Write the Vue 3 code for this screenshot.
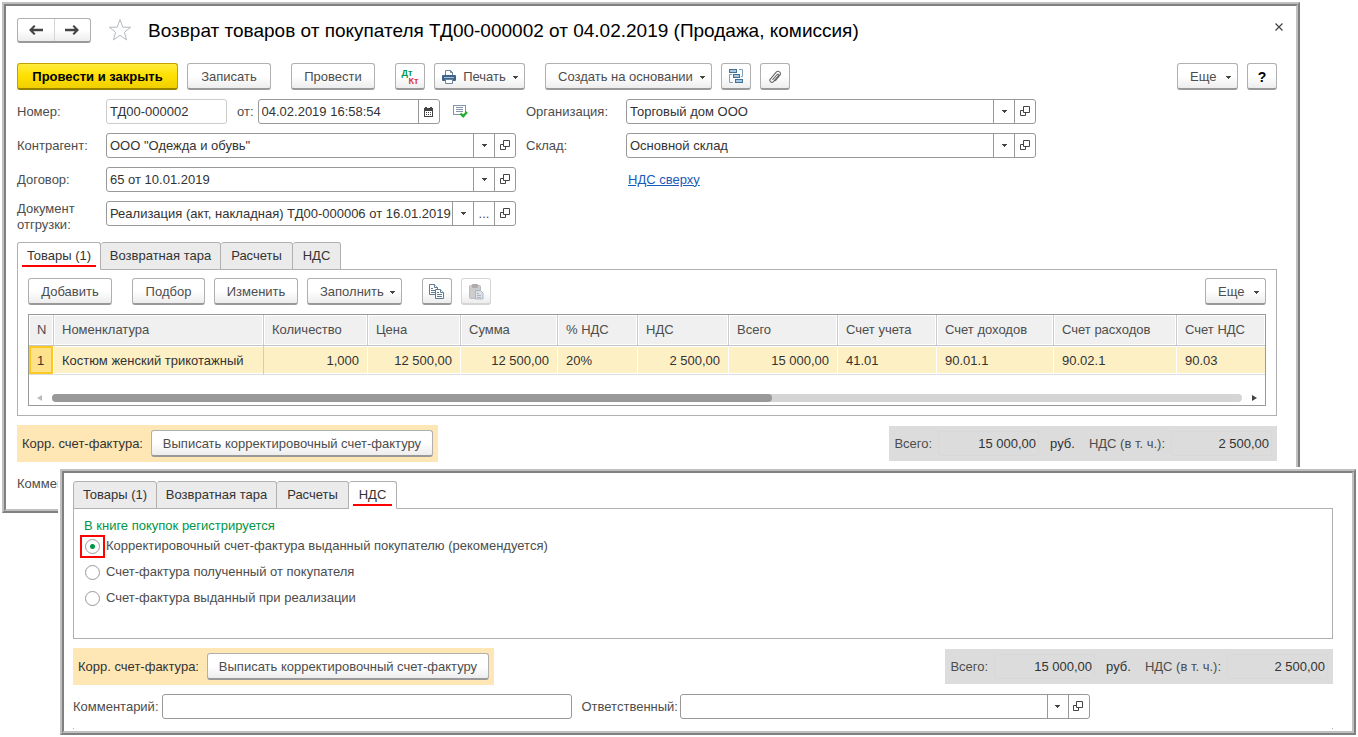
<script setup>
import { ref } from 'vue'

const leftFields = [
  { id: 'partner', label: 'Контрагент:', value: 'ООО "Одежда и обувь"' },
  { id: 'contract', label: 'Договор:', value: '65 от 10.01.2019' },
  { id: 'shipment', label: 'Документ отгрузки:', value: 'Реализация (акт, накладная) ТД00-000006 от 16.01.2019', more: true },
]
const rightFields = [
  { id: 'org', label: 'Организация:', value: 'Торговый дом ООО' },
  { id: 'store', label: 'Склад:', value: 'Основной склад' },
]
const tabs = [
  { title: 'Товары (1)', cls: 't-goods' },
  { title: 'Возвратная тара', cls: 't-tare' },
  { title: 'Расчеты', cls: 't-calc' },
  { title: 'НДС', cls: 't-vat' },
]
const columns = [
  { title: 'N', value: '1', cls: 'c-n' },
  { title: 'Номенклатура', value: 'Костюм женский трикотажный', cls: 'c-name' },
  { title: 'Количество', value: '1,000', cls: 'c-qty', num: true },
  { title: 'Цена', value: '12 500,00', cls: 'c-price', num: true },
  { title: 'Сумма', value: '12 500,00', cls: 'c-sum', num: true },
  { title: '% НДС', value: '20%', cls: 'c-rate' },
  { title: 'НДС', value: '2 500,00', cls: 'c-vat', num: true },
  { title: 'Всего', value: '15 000,00', cls: 'c-total', num: true },
  { title: 'Счет учета', value: '41.01', cls: 'c-acc' },
  { title: 'Счет доходов', value: '90.01.1', cls: 'c-inc' },
  { title: 'Счет расходов', value: '90.02.1', cls: 'c-exp' },
  { title: 'Счет НДС', value: '90.03', cls: 'c-accvat' },
]
const options = [
  'Корректировочный счет-фактура выданный покупателю (рекомендуется)',
  'Счет-фактура полученный от покупателя',
  'Счет-фактура выданный при реализации',
]
const chosen = ref(0)
</script>

<template>
  <div class="desk">
    <svg class="defs" width="0" height="0" aria-hidden="true">
      <symbol id="i-open" viewBox="0 0 11 11">
        <path d="M3.500 .5h6v6h-6zM3 4.500H.5v5h5V7" fill="none" stroke="#444" />
      </symbol>
      <symbol id="i-caret" viewBox="0 0 5 3">
        <path d="M0 0h5v1H4v1H3v1H2V2H1V1H0z" fill="#444" />
      </symbol>
    </svg>

    <main class="window main-window">
      <div class="pane main-pane">
        <header class="title-row">
          <div class="nav">
            <button type="button" aria-label="Назад">
              <svg width="14" height="10" viewBox="0 0 14 10"><path d="M0 5l5-5 1.500 1.200L4.200 3.700H14v2.600H4.200l2.300 2.500L5 10z" fill="#444" /></svg>
            </button>
            <button type="button" aria-label="Вперед">
              <svg width="14" height="10" viewBox="0 0 14 10"><path d="M14 5L9 0 7.500 1.200l2.300 2.500H0v2.600h9.800L7.500 8.800 9 10z" fill="#444" /></svg>
            </button>
          </div>
          <button type="button" class="bare star" aria-label="В избранное">
            <svg width="24" height="24" viewBox="0 0 24 24"><path d="M12 1.500l2.700 7.600 8 .2-6.300 4.900 2.200 7.700L12 17.300l-6.600 4.600 2.200-7.700L1.300 9.300l8-.2z" fill="#fff" stroke="#b3bac2" /></svg>
          </button>
          <h1>Возврат товаров от покупателя ТД00-000002 от 04.02.2019 (Продажа, комиссия)</h1>
          <button type="button" class="bare close" aria-label="Закрыть">
            <svg width="8" height="8" viewBox="0 0 8 8"><path d="M.5.5l7 7M7.500.5l-7 7" stroke="#444" stroke-width="1.200" /></svg>
          </button>
        </header>

        <div class="toolbar">
          <button type="button" class="btn primary">Провести и закрыть</button>
          <button type="button" class="btn w-84">Записать</button>
          <button type="button" class="btn w-84 apart">Провести</button>
          <button type="button" class="btn icon apart" aria-label="Дт Кт">
            <span class="dtkt"><span class="dt">Дт</span><span class="kt">Кт</span></span>
          </button>
          <button type="button" class="btn print">
            <svg width="14" height="14" viewBox="0 0 14 14"><path d="M3.500 6V.5h5l2 2V6" fill="#fff" stroke="#6c8399" /><path d="M8.500.5v2h2" fill="none" stroke="#6c8399" /><rect y="5" width="14" height="6" rx="1" fill="#3c638c" /><path d="M2 7.500h10" stroke="#a9c1d8" /><path d="M3.500 9.500h7v4h-7z" fill="#fff" stroke="#6c8399" /></svg>
            Печать
            <svg class="caret" width="5" height="3"><use href="#i-caret" /></svg>
          </button>
          <button type="button" class="btn menu create apart">Создать на основании <svg class="caret" width="5" height="3"><use href="#i-caret" /></svg></button>
          <button type="button" class="btn icon" aria-label="Структура подчиненности">
            <svg width="15" height="15" viewBox="0 0 15 15"><g fill="#a9c8e0" stroke="#3f7299"><rect x=".5" y=".5" width="7" height="3" /><rect x="4.500" y="5.500" width="6" height="3" /><rect x="6.500" y="10.500" width="7" height="3" /></g><path d="M10 .5h3.500v7H12M4 13.500H.5v-8H3" fill="none" stroke="#7fa3bd" /></svg>
          </button>
          <button type="button" class="btn icon" aria-label="Вложения">
            <svg width="14" height="14" viewBox="0 0 14 14"><path d="M4.500 9.800l4.600-5.300c.9-1 2.200.1 1.400 1.200l-5 5.900c-1.800 1.900-4.700-.5-3.200-2.500l5.900-6.900c2-2.200 5.500.5 3.700 2.900L7.200 11" fill="none" stroke="#666" stroke-width="1.100" /></svg>
          </button>
          <button type="button" class="btn menu more end">Еще <svg class="caret" width="5" height="3"><use href="#i-caret" /></svg></button>
          <button type="button" class="btn icon help">?</button>
        </div>

        <div class="form">
          <div class="col">
            <div class="row">
              <label for="number">Номер:</label>
              <div class="numdate">
                <input id="number" class="box pale" value="ТД00-000002" />
                <label for="date">от:</label>
                <div class="combo date">
                  <input id="date" value="04.02.2019 16:58:54" />
                  <button type="button" aria-label="Календарь">
                    <svg width="9" height="10" viewBox="0 0 9 10"><path d="M0 1h1V0h2v1h3V0h2v1h1v9H0z" fill="#444" /><path d="M1 3.500h7" stroke="#444" /><path d="M1 4h7v5H1z" fill="#fff" /><path d="M2 5.500h5M2 7.500h5" stroke="#444" stroke-dasharray="1 1" /></svg>
                  </button>
                </div>
                <svg class="posted" width="15" height="13" viewBox="0 0 15 13"><rect x=".5" y=".5" width="12" height="9" fill="#fff" stroke="#8493a5" /><path d="M3 2.500h7M3 4.500h7M3 6.500h7" stroke="#8493a5" /><path d="M7.500 8.500l2.700 2.700L14 7" fill="none" stroke="#27b02e" stroke-width="2.400" /></svg>
              </div>
            </div>
            <div v-for="f in leftFields" :key="f.id" class="row">
              <label :for="f.id">{{ f.label }}</label>
              <div class="combo">
                <input :id="f.id" :value="f.value" />
                <button type="button" aria-label="Выбрать из списка"><svg width="5" height="3"><use href="#i-caret" /></svg></button>
                <button v-if="f.more" type="button" aria-label="Выбрать">...</button>
                <button type="button" aria-label="Открыть"><svg width="11" height="11"><use href="#i-open" /></svg></button>
              </div>
            </div>
          </div>
          <div class="col second">
            <div v-for="f in rightFields" :key="f.id" class="row">
              <label :for="f.id">{{ f.label }}</label>
              <div class="combo">
                <input :id="f.id" :value="f.value" />
                <button type="button" aria-label="Выбрать из списка"><svg width="5" height="3"><use href="#i-caret" /></svg></button>
                <button type="button" aria-label="Открыть"><svg width="11" height="11"><use href="#i-open" /></svg></button>
              </div>
            </div>
            <div class="row link-row"><a href="#">НДС сверху</a></div>
          </div>
        </div>

        <div class="tabs" role="tablist">
          <button v-for="(t, i) in tabs" :key="t.cls" type="button" role="tab" :class="[t.cls, { active: i === 0 }]" :aria-selected="i === 0">{{ t.title }}</button>
        </div>
        <section class="panel goods">
          <div class="toolbar">
            <button type="button" class="btn w-84">Добавить</button>
            <button type="button" class="btn pick apart">Подбор</button>
            <button type="button" class="btn w-84">Изменить</button>
            <button type="button" class="btn menu fill">Заполнить <svg class="caret" width="5" height="3"><use href="#i-caret" /></svg></button>
            <button type="button" class="btn icon apart" aria-label="Копировать">
              <svg width="16" height="16" viewBox="0 0 16 16"><g fill="#fff" stroke="#5f7b93"><path d="M.5.5h5l3 3v7h-8z" /><path d="M5.500.5v3h3M2 4.500h2M2 6.500h4M2 8.500h4" /><path d="M6.500 5.500h5l3 3v6h-8z" /><path d="M11.500 5.500v3h3M8 8.500h2M8 10.500h5M8 12.500h5" /></g></svg>
            </button>
            <button type="button" class="btn icon" disabled aria-label="Вставить">
              <svg width="15" height="16" viewBox="0 0 15 16"><rect x=".5" y="1.500" width="11" height="13" rx="1" fill="#ccc" stroke="#bbb" /><rect x="3" width="6" height="4" rx="1" fill="#b0aba8" /><path d="M6.500 6.500h5l2.500 2.500v6H6.500z" fill="#dde1e6" stroke="#acb6c0" /><path d="M8 9.500h2M8 11.500h4M8 13.500h4" stroke="#acb6c0" /></svg>
            </button>
            <button type="button" class="btn menu more end">Еще <svg class="caret" width="5" height="3"><use href="#i-caret" /></svg></button>
          </div>
          <div class="grid-box">
            <table>
              <thead>
                <tr><th v-for="c in columns" :key="c.title" :class="c.cls" scope="col">{{ c.title }}</th></tr>
              </thead>
              <tbody>
                <tr><td v-for="c in columns" :key="c.title" :class="[c.cls, { num: c.num }]">{{ c.value }}</td></tr>
              </tbody>
            </table>
            <div class="scroll">
              <svg width="5" height="6" viewBox="0 0 5 6"><path d="M5 0v6L0 3z" fill="#bbb" /></svg>
              <div class="track"><div class="thumb"></div></div>
              <svg width="5" height="6" viewBox="0 0 5 6"><path d="M0 0v6l5-3z" fill="#444" /></svg>
            </div>
          </div>
        </section>

        <div class="summary">
          <div class="invoice">
            <span>Корр. счет-фактура:</span>
            <button type="button" class="btn issue">Выписать корректировочный счет-фактуру</button>
          </div>
          <div class="totals">
            <label for="total-a">Всего:</label>
            <input id="total-a" value="15 000,00" readonly />
            <span class="cur">руб.</span>
            <label for="vat-a">НДС (в т. ч.):</label>
            <input id="vat-a" value="2 500,00" readonly />
          </div>
        </div>
        <div class="footer">
          <label for="comment-a">Комментарий:</label>
          <input id="comment-a" class="box comment" />
        </div>
      </div>
    </main>

    <section class="window vat-window">
      <div class="pane vat-pane">
        <div class="tabs" role="tablist">
          <button v-for="(t, i) in tabs" :key="t.cls" type="button" role="tab" :class="[t.cls, { active: i === 3 }]" :aria-selected="i === 3">{{ t.title }}</button>
        </div>
        <fieldset class="panel vat">
          <legend>В книге покупок регистрируется</legend>
          <label v-for="(o, i) in options" :key="o" class="option">
            <span class="mark" :class="{ framed: i === 0 }"><input v-model="chosen" type="radio" name="book" :value="i" /></span>
            {{ o }}
          </label>
        </fieldset>
        <div class="summary">
          <div class="invoice">
            <span>Корр. счет-фактура:</span>
            <button type="button" class="btn issue">Выписать корректировочный счет-фактуру</button>
          </div>
          <div class="totals">
            <label for="total-b">Всего:</label>
            <input id="total-b" value="15 000,00" readonly />
            <span class="cur">руб.</span>
            <label for="vat-b">НДС (в т. ч.):</label>
            <input id="vat-b" value="2 500,00" readonly />
          </div>
        </div>
        <div class="footer">
          <label for="comment-b">Комментарий:</label>
          <input id="comment-b" class="box comment" />
          <label for="responsible" class="resp">Ответственный:</label>
          <div class="combo">
            <input id="responsible" />
            <button type="button" aria-label="Выбрать из списка"><svg width="5" height="3"><use href="#i-caret" /></svg></button>
            <button type="button" aria-label="Открыть"><svg width="11" height="11"><use href="#i-open" /></svg></button>
          </div>
        </div>
        <div class="edge"></div>
      </div>
    </section>
  </div>
</template>

<style>
body {
  margin: 0;
  background: #fff;
}
</style>

<style scoped>
* {
  box-sizing: border-box;
}
.desk {
  display: grid;
  font: 13px/16px "Liberation Sans", Arial, sans-serif;
  color: #4d4d4d;
}
.defs {
  position: absolute;
}
button,
input {
  font: inherit;
  color: inherit;
  margin: 0;
}
button {
  padding: 0;
}
svg {
  display: block;
  flex: none;
}

.window {
  grid-area: 1 / 1;
  align-self: start;
  min-width: 0;
  border: 2px solid;
  border-color: #c0c0c0 #808080 #808080 #c0c0c0;
  background: #fff;
}
.pane {
  border: 2px solid;
  border-color: #808080 #c0c0c0 #c0c0c0 #808080;
}
.main-window {
  margin: 2px 58px 0 2px;
}
.main-pane {
  padding: 11px 19px 13px 11px;
}
.vat-window {
  margin: 469px 2px 0 60px;
  box-shadow: 0 0 0 2px #fff;
}
.vat-pane {
  padding: 8px 19px 2px 9px;
}

.title-row {
  display: flex;
  align-items: center;
  height: 26px;
}
.nav {
  display: flex;
  width: 74px;
  height: 25px;
  border: 1px solid #b0b0b0;
  border-bottom: 2px solid #999;
  border-radius: 3px;
  background: linear-gradient(#fff 50%, #ededed);
}
.nav button {
  flex: 1;
  display: grid;
  place-items: center;
  border: 0;
  background: none;
}
.nav button + button {
  border-left: 1px solid #d5d5d5;
}
.bare {
  border: 0;
  background: none;
}
.star {
  margin: 0 16px 0 17px;
}
h1 {
  margin: 0;
  padding-top: 2px;
  font-size: 19px;
  line-height: 24px;
  font-weight: 400;
  color: #000;
  white-space: nowrap;
}
.close {
  margin: -6px -6px 0 auto;
}

.toolbar {
  display: flex;
  gap: 9px;
}
.title-row + .toolbar {
  margin-top: 20px;
}
.btn {
  display: flex;
  align-items: center;
  justify-content: center;
  height: 27px;
  padding: 1px 0 0;
  border: 1px solid #b0b0b0;
  border-bottom: 2px solid #999;
  border-radius: 3px;
  background: linear-gradient(#fff 50%, #ededed);
  white-space: nowrap;
}
.btn.apart {
  margin-left: 11px;
}
.w-84 {
  width: 84px;
}
.btn.icon {
  width: 30px;
}
.btn.menu {
  justify-content: space-between;
  padding-left: 12px;
  padding-right: 6px;
}
.btn.print {
  justify-content: space-between;
  width: 91px;
  padding-left: 7px;
  padding-right: 6px;
}
.btn.create {
  width: 167px;
}
.btn.more {
  width: 61px;
}
.btn.pick {
  width: 73px;
}
.btn.fill {
  width: 95px;
}
.btn.issue {
  width: 282px;
}
.btn.end {
  margin-left: auto;
}
.btn:disabled {
  border-color: #d5d5d5;
}
.btn.primary {
  width: 161px;
  border-color: #bfa100;
  border-bottom-color: #998100;
  background: linear-gradient(#ffec3d, #ffe000 50%, #f0cf00);
  color: #000;
  font-weight: 700;
}
.caret {
  margin-top: 2px;
}
.help {
  color: #000;
  font-size: 14px;
  font-weight: 700;
}
.dtkt {
  display: flex;
  flex-direction: column;
  width: 17px;
  font-size: 9px;
  line-height: 8px;
  font-weight: 700;
}
.dt {
  color: #009646;
  text-align: left;
}
.kt {
  color: #d9373c;
  text-align: right;
}

.form {
  display: grid;
  grid-template-columns: minmax(0, 499px) minmax(0, 510px);
  column-gap: 10px;
  margin-top: 9px;
}
.col {
  display: grid;
  grid-auto-rows: 25px;
  align-content: start;
  row-gap: 9px;
}
.row {
  display: grid;
  grid-template: 25px / 89px minmax(0, 1fr);
  align-items: center;
}
.second .row {
  grid-template-columns: 100px minmax(0, 1fr);
}
.link-row a {
  grid-column: 2;
  padding-left: 2px;
}
a {
  color: #1a5bb8;
  text-decoration: underline;
}
.row > label {
  max-width: 80px;
}
.second .row > label {
  max-width: none;
}
.col:not(.second) .row:last-child > label {
  align-self: start;
}
.numdate {
  display: flex;
  align-items: center;
}
.box,
.combo {
  height: 25px;
  border: 1px solid #999;
  border-radius: 3px;
  background: #fff;
}
.box {
  padding: 0 3px;
  outline: 0;
  color: #333;
}
.pale {
  width: 121px;
  margin-right: 10px;
  border-color: #ccc;
}
.date {
  width: 182px;
  margin: 0 13px 0 4px;
}
.combo {
  display: flex;
  min-width: 0;
}
.date.combo {
  flex: none;
}
.combo input {
  flex: 1;
  min-width: 0;
  padding: 0 0 0 3px;
  border: 0;
  outline: 0;
  background: none;
  color: #333;
}
.combo button {
  flex: none;
  display: grid;
  place-items: center;
  width: 21px;
  border: 0;
  border-left: 1px solid #999;
  background: none;
}

.tabs {
  display: flex;
  margin-bottom: -1px;
}
.form + .tabs {
  margin-top: 16px;
}
.tabs button {
  height: 28px;
  border: 1px solid #b0b0b0;
  border-left-width: 0;
  border-radius: 3px 3px 0 0;
  background: #ebebeb;
  color: #333;
  white-space: nowrap;
}
.tabs button:first-child {
  border-left-width: 1px;
}
.tabs .active {
  border-bottom-color: #fff;
  background: linear-gradient(#f00, #f00) 50% 22px / calc(100% - 8px) 2px no-repeat #fff;
}
.t-goods {
  width: 84px;
}
.t-tare {
  width: 120px;
}
.t-calc {
  width: 72px;
}
.t-vat {
  width: 48px;
}
.panel {
  border: 1px solid #b0b0b0;
}
.goods {
  padding: 8px 10px 9px;
}
.grid-box {
  margin-top: 9px;
  border: 1px solid #999;
}
table {
  width: 100%;
  table-layout: fixed;
  border-collapse: separate;
  border-spacing: 0;
}
th,
td {
  padding: 0 8px;
  text-align: left;
  font-weight: 400;
  white-space: nowrap;
  overflow: hidden;
}
th {
  height: 31px;
  border-right: 1px solid #ccc;
  border-bottom: 1px solid #c4c4c4;
  background: #f0f0f0;
  box-shadow: inset 0 0 0 1px #fff;
}
td {
  height: 29px;
  padding-top: 2px;
  border-right: 1px solid #fff;
  border-bottom: 1px solid #ddd;
  background: #fdf0c5;
  box-shadow: inset 0 1px #fff, inset 0 -1px #fff;
  color: #333;
}
td.c-name {
  border-right-color: #ccc;
}
td.c-n {
  background: #fde28b;
  box-shadow: inset 0 0 0 2px #fcc920;
}
.num {
  text-align: right;
}
.c-n {
  width: 25px;
}
.c-qty {
  width: 104px;
}
.c-price {
  width: 93px;
}
.c-sum {
  width: 97px;
}
.c-rate {
  width: 80px;
}
.c-vat {
  width: 91px;
}
.c-total {
  width: 109px;
}
.c-acc {
  width: 99px;
}
.c-inc {
  width: 117px;
}
.c-exp {
  width: 123px;
}
.c-accvat {
  width: 88px;
  border-right: 0;
}
.scroll {
  display: flex;
  align-items: center;
  gap: 10px;
  padding: 19px 8px 3px;
}
.track {
  flex: 1;
  height: 8px;
  border-radius: 4px;
  background: #d5d5d5;
}
.thumb {
  width: 60.5%;
  height: 8px;
  border-radius: 4px;
  background: #999;
}

.summary {
  display: flex;
  justify-content: space-between;
  align-items: center;
  margin-top: 9px;
}
.invoice {
  display: flex;
  align-items: center;
  gap: 8px;
  height: 37px;
  padding: 0 5px;
  background: #ffe7b5;
  color: #333;
}
.invoice .btn {
  color: #4d4d4d;
}
.totals {
  display: flex;
  align-items: center;
  height: 35px;
  padding: 0 5px;
  background: #dcdcdc;
}
.totals input {
  width: 101px;
  height: 25px;
  margin-left: 6px;
  padding: 0 2px;
  border: 1px solid #d8d8d8;
  border-radius: 3px;
  outline: 0;
  background: none;
  color: #333;
  text-align: right;
}
.cur {
  margin: 0 14px 0 11px;
  color: #333;
}
.footer {
  display: flex;
  align-items: center;
  margin-top: 9px;
}
.comment {
  flex: 0 1 410px;
  min-width: 0;
  margin-left: 3px;
}
.resp {
  margin: 0 2px 0 10px;
}
.footer .combo {
  flex: 0 1 410px;
}
.edge {
  height: 1px;
  margin-top: 9px;
  border: solid #b0b0b0;
  border-width: 0 1px;
}

.vat {
  min-width: 0;
  margin: 0;
  padding: 9px 10px 27px;
}
.vat legend {
  float: left;
  width: 100%;
  height: 15px;
  padding: 0;
  color: #009646;
}
.option {
  clear: both;
  display: flex;
  align-items: center;
  height: 26px;
}
.mark {
  display: grid;
  place-items: center;
  width: 25px;
  height: 23px;
  margin: 0 1px 0 -4px;
}
.framed {
  border: 2px solid #f00;
}
.mark input {
  appearance: none;
  width: 15px;
  height: 15px;
  border: 1px solid #999;
  border-radius: 50%;
  background: #fff;
}
.mark input:checked {
  background: radial-gradient(circle, #009646 0 2px, #fff 3px);
}
</style>
